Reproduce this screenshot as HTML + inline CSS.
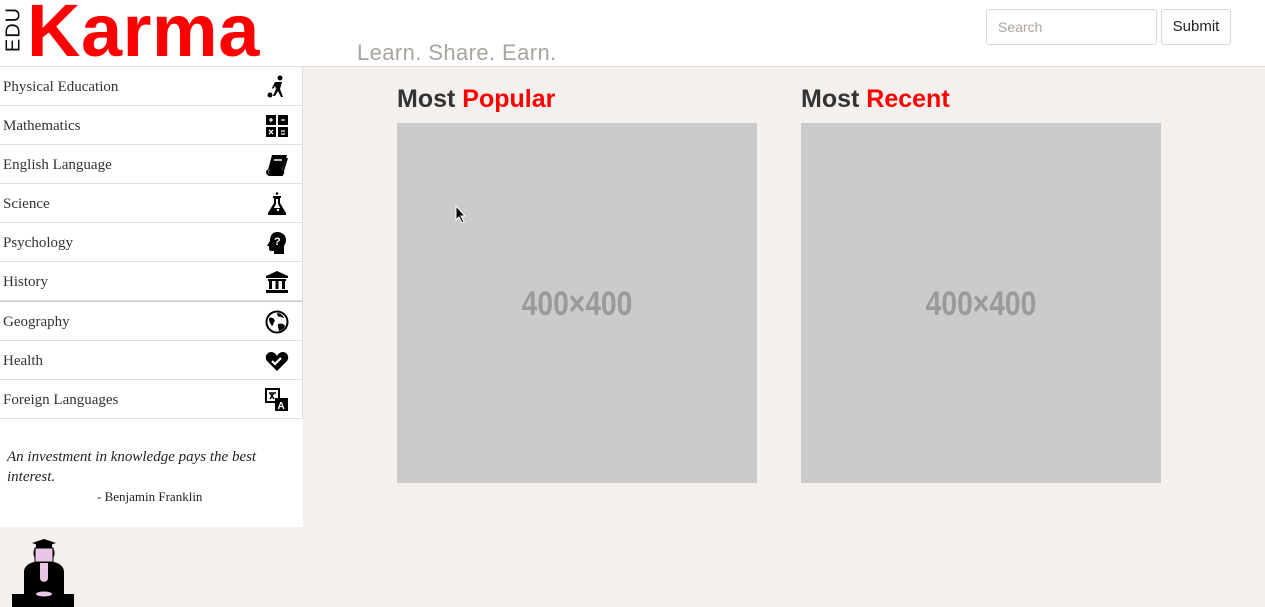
<!DOCTYPE html>
<html><head><style>
*{box-sizing:border-box;margin:0;padding:0}
body{width:1265px;height:607px;overflow:hidden;background:#f3f0ed;font-family:"Liberation Sans",sans-serif;position:relative}
.hdr{position:absolute;left:0;top:0;width:1265px;height:67px;background:#fff;border-bottom:1px solid #e2ddd9}
.edu{position:absolute;left:-10px;top:20px;transform:rotate(-90deg);font-size:20px;color:#111;letter-spacing:1px;width:48px;text-align:center;line-height:19px}
.karma{position:absolute;left:27px;top:-12px;font-size:74px;font-weight:bold;color:#f00;letter-spacing:0.5px}
.tag{position:absolute;left:357px;top:40px;font-size:22px;color:#aaa49f;letter-spacing:0.4px}
.search{position:absolute;left:986px;top:9px;width:171px;height:36px;border:1px solid #ddd8d4;border-radius:3px;padding:9px 11px;font-size:14px;color:#aaa49f}
.sub{position:absolute;left:1161px;top:9px;width:70px;height:36px;border:1px solid #ddd8d4;border-radius:3px;font-size:15px;color:#222;text-align:center;line-height:34px;background:#fff}
.side{position:absolute;left:0;top:67px;width:303px;background:#fff}
.it{height:39px;border-bottom:1px solid #e2ddd9;border-right:1px solid #e2ddd9;font-family:"Liberation Serif",serif;font-size:15px;color:#333;padding:12px 3px;position:relative}
.it svg{position:absolute;left:265px;top:8px}
.q{position:absolute;left:0;top:419px;width:303px;height:108px;background:#fff;font-family:"Liberation Serif",serif;color:#222}
.q i{position:absolute;left:7px;top:28px;font-size:15px;line-height:20px;width:290px}
.q span{position:absolute;left:97px;top:70px;font-size:13px}
h2{position:absolute;top:85px;font-size:25px;font-weight:bold;color:#333}
h2 b{color:#f00}
.ph{position:absolute;top:123px;width:360px;height:360px;background:#cbcbcb}
.ph span{position:absolute;left:0;width:360px;top:162px;text-align:center;color:#9a9a9a;font-size:34px;font-weight:bold;transform:scaleX(0.83)}
</style></head><body>
<div class="hdr">
<div class="edu">EDU</div>
<div class="karma">Karma</div>
<div class="tag">Learn. Share. Earn.</div>
<div class="search">Search</div>
<div class="sub">Submit</div>
</div>
<div class="side">
<div class="it">Physical Education<svg width="24" height="24" viewBox="0 0 24 24"><circle cx="15" cy="3" r="2.5"/><path d="M10 7h7l-2 7 3 8h-2l-3-6-3 5H8l3-7-1-3-2 3-1-1z"/><circle cx="5" cy="20" r="2.5"/></svg></div>
<div class="it">Mathematics<svg width="24" height="24" viewBox="0 0 24 24"><rect x="1" y="1" width="10" height="10"/><rect x="13" y="1" width="10" height="10"/><rect x="1" y="13" width="10" height="10"/><rect x="13" y="13" width="10" height="10"/><path d="M4 6h4M6 4v4M16 6h4M4 16l4 4M8 16l-4 4M16 17h4M16 20h4" stroke="#fff" stroke-width="1.3"/></svg></div>
<div class="it">English Language<svg width="24" height="24" viewBox="0 0 24 24"><path d="M7 2h15l-5 15H3z"/><path d="M3 17c-2 3 0 5 2 5h12l1-2H6c-2 0-2-2 0-2h12l4-13" fill="none" stroke="#000" stroke-width="2"/><path d="M9 7h8" stroke="#fff" stroke-width="1.5"/></svg></div>
<div class="it">Science<svg width="24" height="24" viewBox="0 0 24 24"><circle cx="12" cy="1.5" r="1.3"/><path d="M8 4h8v2h-1v5l6 10v2H3v-2l6-10V6H8z"/><path d="M11 7v5l-5 9h12l-5-9V7z" fill="#fff"/><path d="M8 16h8l2 5H6z"/><circle cx="13" cy="18" r="1.2" fill="#fff"/></svg></div>
<div class="it">Psychology<svg width="24" height="24" viewBox="0 0 24 24"><path d="M12 1c5 0 9 3 9 8 0 3-1 4-2 6v8H9v-3H6c-1 0-2-1-2-2v-3H2l3-5C5 4 8 1 12 1z"/><text x="9" y="14" font-size="11" font-weight="bold" fill="#fff" font-family="Liberation Sans">?</text></svg></div>
<div class="it">History<svg width="24" height="24" viewBox="0 0 24 24"><path d="M12 1l11 5v2H1V6z"/><rect x="1" y="20" width="22" height="3"/><rect x="3" y="9" width="18" height="2"/><rect x="4" y="11" width="3" height="8"/><rect x="10.5" y="11" width="3" height="8"/><rect x="17" y="11" width="3" height="8"/></svg></div>
<div class="it" style="border-top:1px solid #ccc;height:40px">Geography<svg width="24" height="24" viewBox="0 0 24 24"><circle cx="12" cy="12" r="10.5" fill="none" stroke="#000" stroke-width="2"/><path d="M4 8c3-1 5 0 6 3-2 1-1 4-3 5-1-2-3-3-3-8zM12 3c3 0 6 2 7 5-2 0-3-2-5-1-1-1-2-2-2-4zM13 14c3-1 6 0 7 2-1 3-4 5-6 5 0-3-2-4-1-7z"/></svg></div>
<div class="it">Health<svg width="24" height="24" viewBox="0 0 24 24"><path d="M12 22L2 12C-1 8 2 3 6 3c3 0 5 2 6 4 1-2 3-4 6-4 4 0 7 5 4 9z"/><path d="M7 12l3 3 6-6" stroke="#fff" stroke-width="2.2" fill="none"/></svg></div>
<div class="it">Foreign Languages<svg width="24" height="24" viewBox="0 0 24 24"><rect x="1" y="1" width="13" height="13" fill="#fff" stroke="#000" stroke-width="2"/><path d="M4 5h7M5 5l4 6M9 5l-4 6" stroke="#000" stroke-width="1.5"/><rect x="10" y="10" width="13" height="13"/><text x="12.5" y="21" font-size="10" font-weight="bold" fill="#fff" font-family="Liberation Sans">A</text></svg></div>
</div>
<div class="q"><i>An investment in knowledge pays the best interest.</i><span>- Benjamin Franklin</span></div>
<svg style="position:absolute;left:10px;top:538px" width="70" height="69" viewBox="0 0 70 69"><path d="M22 5l12-4 12 4-12 4z"/><rect x="26" y="6" width="16" height="5"/><path d="M25 10h18v14H25z" fill="#e8c6e4" stroke="#000"/><path d="M25 10c-2 2-2 8 0 10zM43 10c2 2 2 8 0 10z"/><path d="M14 34c0-6 6-10 12-10h16c6 0 12 4 12 10v22h10v13H2V56h12z"/><path d="M30 25h8v15c0 5-8 5-8 0z" fill="#e8c6e4"/><ellipse cx="34" cy="56" rx="8" ry="2.5" fill="#e8c6e4"/></svg>
<h2 style="left:397px">Most <b>Popular</b></h2>
<h2 style="left:801px">Most <b>Recent</b></h2>
<div class="ph" style="left:397px"><span>400×400</span></div>
<div class="ph" style="left:801px"><span>400×400</span></div>
<svg style="position:absolute;left:455px;top:205px" width="12" height="18" viewBox="0 0 12 18"><path d="M1 1v14l3-3 3 6 2-1-3-6h4z" stroke="#fff" stroke-width="1"/></svg>
</body></html>
